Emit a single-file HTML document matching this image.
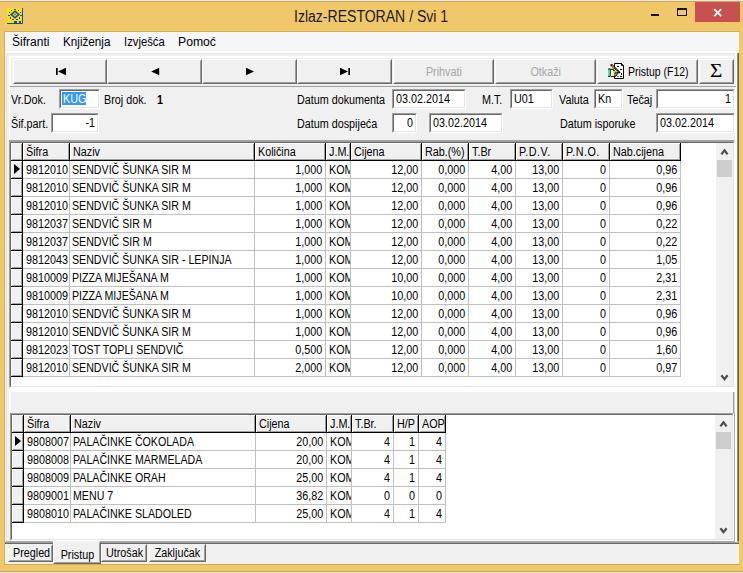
<!DOCTYPE html><html><head><meta charset="utf-8"><title>Izlaz-RESTORAN / Svi 1</title><style>
html,body{margin:0;padding:0}
body{width:743px;height:573px;overflow:hidden;position:relative;background:#F0C869;font:12.5px/14px "Liberation Sans",sans-serif;color:#000}
div,span,i{box-sizing:border-box}
.abs,.lbl,.ed,.btn,.grid,.hc,.c,.sb,.tab{position:absolute}
.t{display:inline-block;white-space:nowrap;transform:scaleX(0.862);transform-origin:0 50%}
.t.n{transform:scaleX(.851);margin-left:-.5px}
.r>.t,.r>div>.t{transform-origin:100% 50%}
.ctr .t{transform-origin:50% 50%}
#top0{left:0;top:0;width:743px;height:1px;background:#E4E4EA}
#top1{left:0;top:1px;width:743px;height:1px;background:#CDAB5A}
#bot{left:0;top:571px;width:743px;height:2px;background:#E6E6EC;border-top:1px solid #C2A050}
#title{left:294px;top:6px;font-size:15.6px;line-height:22px;color:#1c1c1c;white-space:nowrap;transform:scaleX(.90);transform-origin:0 50%}
#close{left:695px;top:2px;width:45px;height:20px;background:#C75050}
#client{left:5px;top:31px;width:734px;height:533px;background:#F0F0F0}
#menu{left:5px;top:32px;width:734px;height:18px;background:#F5F6F7;font-size:12.5px;line-height:20px}
#menu span{position:absolute;top:0;white-space:nowrap;transform-origin:0 50%}
.lbl{white-space:nowrap;line-height:14px;height:14px}
.ed{background:#fff;border:1px solid;border-color:#A0A0A0 #fff #fff #A0A0A0;height:21px}
.ed>div{position:absolute;left:0;top:0;right:0;bottom:0;border:1px solid;border-color:#696969 #E3E3E3 #E3E3E3 #696969;line-height:14px;padding:1px 0 0 2px;white-space:nowrap;overflow:hidden}
.ed.r>div{text-align:right;padding-right:2px}
.btn{height:25px;top:59px;background:#F0F0F0;border:1px solid;border-color:#fff #696969 #696969 #fff;text-align:center;line-height:24px}
.btn:after{content:"";position:absolute;left:0;top:0;right:0;bottom:0;border:1px solid;border-color:#F0F0F0 #A0A0A0 #A0A0A0 #F0F0F0;pointer-events:none}
.btn.dis{color:#A6A6A6}
.btn svg{position:absolute}
.grid{background:#fff;border:2px solid;border-color:#696969 #E3E3E3 #E3E3E3 #696969;box-sizing:content-box}
.grid:before{content:"";position:absolute;left:-2px;top:-2px;right:-2px;bottom:-2px;border:1px solid;border-color:#A0A0A0 #fff #fff #A0A0A0}
.hc{background:#F0F0F0;height:18px;border-right:1px solid #000;border-bottom:1px solid #000;box-shadow:inset 1px 1px 0 #fff,inset -1px -1px 0 #A0A0A0;line-height:19px;white-space:nowrap;overflow:hidden;padding-left:2.5px}
.c{height:18px;line-height:19px;border-right:1px solid #C0C0C0;border-bottom:1px solid #C0C0C0;white-space:nowrap;overflow:hidden;padding-left:2.5px}
.c.r{text-align:right;padding-right:3px;padding-left:0}
.arr{position:absolute;left:3px;top:3px;width:0;height:0;border-left:6px solid #000;border-top:5.5px solid transparent;border-bottom:5.5px solid transparent}
.sb{width:17px;background:#F0F0F0}
.sb .up{position:absolute;left:0;top:0}
.sb .dn{position:absolute;left:0;bottom:0}
.sb .th{position:absolute;left:1px;width:15px;background:#CDCDCD}
.tab{white-space:nowrap;text-align:center}
</style></head><body>
<div class="abs" id="top0"></div><div class="abs" id="top1"></div><div class="abs" id="bot"></div>
<svg class="abs" style="left:7px;top:8px" width="16" height="16" viewBox="0 0 16 16">
<rect x="0" y="0" width="16" height="16" fill="#FFE100"/>
<path d="M15.5 0 V15.5 H0" fill="none" stroke="#0A4FB8" stroke-width="1"/>
<path d="M8 2.3 L13 6.5 L8 10.7 L3 6.5 Z" fill="#0A4FB8"/><path d="M8 4.3 L10.6 6.5 L8 8.7 L5.4 6.5 Z" fill="#FFE100"/><rect x="7.3" y="5.8" width="1.4" height="1.4" fill="#0A4FB8"/>
<g fill="#0A4FB8"><rect x="7" y="1" width="2" height="1"/><rect x="4" y="2" width="1" height="1"/><rect x="11" y="2" width="1" height="1"/><rect x="2" y="4" width="1" height="1"/><rect x="13" y="4" width="1" height="1"/><rect x="1" y="7" width="2" height="1"/><rect x="13" y="7" width="2" height="1"/><rect x="3" y="9" width="1" height="2"/><rect x="12" y="9" width="1" height="2"/><rect x="5" y="11" width="2" height="1"/><rect x="9" y="11" width="2" height="1"/><rect x="7" y="13" width="3" height="2"/><rect x="12" y="13" width="2" height="2"/></g>
</svg>
<div class="abs" id="title">Izlaz-RESTORAN / Svi 1</div>
<div class="abs" style="left:651px;top:14px;width:8px;height:2px;background:#111"></div>
<div class="abs" style="left:677px;top:8px;width:10px;height:8px;border:1px solid #111;border-top-width:2px"></div>
<div class="abs" id="close"><svg width="45" height="20" viewBox="0 0 45 20"><path d="M19.2 7.2 L26.2 14.2 M26.2 7.2 L19.2 14.2" stroke="#fff" stroke-width="1.8" fill="none"/></svg></div>
<div class="abs" id="client"></div>
<div class="abs" style="left:4px;top:564px;width:736px;height:1px;background:#CDAA57"></div>
<div class="abs" style="left:4px;top:31px;width:736px;height:1px;background:#D2AE59"></div>
<div class="abs" id="menu"><span style="left:6.7px;transform:scaleX(0.961)">Šifranti</span><span style="left:57.9px;transform:scaleX(0.936)">Knjiženja</span><span style="left:118.6px;transform:scaleX(0.901)">Izvješća</span><span style="left:173.1px;transform:scaleX(0.976)">Pomoć</span></div>
<div class="abs" style="left:5px;top:51px;width:734px;height:2px;background:#fff"></div>
<div class="abs" style="left:4px;top:31px;width:1px;height:533px;background:#D6B15A"></div>
<div class="abs" style="left:6px;top:53px;width:732px;height:1px;background:#E6E6E6"></div>
<div class="abs" style="left:735px;top:53px;width:1.5px;height:488px;background:#fff"></div>
<div class="abs" style="left:737px;top:53px;width:1px;height:491px;background:#909090"></div>
<div class="abs" style="left:738px;top:53px;width:1px;height:491px;background:#5F5F66"></div>
<div class="abs" style="left:5px;top:541px;width:734px;height:1px;background:#A8A8A8"></div>
<div class="abs" style="left:5px;top:542px;width:734px;height:1px;background:#A0A0A0"></div>
<div class="abs" style="left:5px;top:543px;width:734px;height:1px;background:#696969"></div>
<div class="abs" style="left:9px;top:56px;width:727px;height:30px;border:2px solid;border-color:#fff #F0F0F0 #F0F0F0 #fff"></div>
<div class="btn" style="left:13px;width:94px"></div>
<div class="btn" style="left:107px;width:95px"></div>
<div class="btn" style="left:202px;width:95px"></div>
<div class="btn" style="left:297px;width:95px"></div>
<svg class="abs" style="left:0;top:59px" width="400" height="25" viewBox="0 59 400 25"><g fill="#000"><rect x="56" y="68" width="1.7" height="7"/><path d="M58 71.5 L66 67.8 V75.2 Z"/><path d="M151.2 71.5 L159.2 67.8 V75.2 Z"/><path d="M254 71.5 L246 67.8 V75.2 Z"/><path d="M348 71.5 L340 67.8 V75.2 Z"/><rect x="348.3" y="68" width="1.7" height="7"/></g></svg>
<div class="btn dis ctr" style="left:393px;width:101px"><span class="t">Prihvati</span></div>
<div class="btn dis ctr" style="left:495px;width:101px"><span class="t">Otkaži</span></div>
<div class="btn" style="left:597px;width:101px"><svg style="left:10px;top:3px" width="17" height="17" viewBox="0 0 17 17">
<path d="M6.5 0.5 H13.5 L15.5 2.5 V15.5 H6.5 Z" fill="#fff" stroke="#000" stroke-width="1"/>
<path d="M13.5 0.5 V2.5 H15.5" fill="none" stroke="#000" stroke-width="1"/>
<path d="M9 3.5 H11 M12 6.5 H14 M13.5 10 V12 M9.5 13.5 H10.5 M12 13.5 H14" stroke="#000" stroke-width="1" fill="none"/>
<path d="M3 1.5 L11.8 10" stroke="#000" stroke-width="2.3" fill="none"/>
<path d="M4 2.5 L11 9.3" stroke="#FFF000" stroke-width="1.1" stroke-dasharray="1.2 .5" fill="none"/>
<rect x="2.6" y="1" width="1.2" height="1.2" fill="#E00000"/>
<path d="M2.2 6.3 L5.2 6.3 L6.8 5.6 L8.6 7.2 L10.6 8.3 L10.6 9.6 L9 10 L9 12 L7.5 13.6 L3.5 13.6 L2.2 12.6 Z" fill="#FFF88C" stroke="#000" stroke-width="1"/>
<path d="M5 7.6 H7 M6.5 9.2 H10 M6 10.8 H8.4 M6 12.3 H7.8" stroke="#000" stroke-width="0.9" fill="none"/>
<rect x="0.2" y="6" width="1.7" height="7.4" fill="#00E5F5"/>
<path d="M0.2 6 H2.2 M0.2 13.4 H2.2" stroke="#000" stroke-width="1" fill="none"/>
</svg><span class="t" style="position:absolute;left:30px;top:0;transform:scaleX(.838)">Pristup (F12)</span></div>
<div class="btn" style="left:699px;width:35px;font:18px 'Liberation Serif',serif;line-height:22px"><span style="display:inline-block;transform:scaleX(1.18)">Σ</span></div>
<div class="abs" style="left:10px;top:86px;width:726px;height:1px;background:#A0A0A0"></div>
<div class="abs" style="left:9px;top:87px;width:1px;height:54px;background:#fff"></div>
<div class="abs" style="left:5px;top:53px;width:1px;height:489px;background:#fff"></div>
<div class="abs" style="left:6px;top:54px;width:1px;height:487px;background:#E6E6E6"></div>
<div class="lbl" style="left:10.5px;top:93px;"><span class="t">Vr.Dok.</span></div>
<div class="ed" style="left:59px;top:89px;width:41px;height:20px"><div><span style="position:absolute;left:1px;top:1px;width:24px;height:13px;background:#3399FF"></span><span class="t" style="color:#fff;position:relative">KUG</span></div></div>
<div class="lbl" style="left:104px;top:93px;"><span class="t">Broj dok.</span></div>
<div class="lbl" style="left:157px;top:93px;font-weight:bold"><span class="t">1</span></div>
<div class="lbl" style="left:297px;top:93px;"><span class="t">Datum dokumenta</span></div>
<div class="ed" style="left:392px;top:89px;width:74px;height:20px"><div><span class=t>03.02.2014</span></div></div>
<div class="lbl" style="left:482px;top:93px;"><span class="t">M.T.</span></div>
<div class="ed" style="left:510px;top:89px;width:43px;height:20px"><div><span class=t>U01</span></div></div>
<div class="lbl" style="left:559px;top:93px;"><span class="t">Valuta</span></div>
<div class="ed" style="left:594px;top:89px;width:29px;height:20px"><div><span class=t>Kn</span></div></div>
<div class="lbl" style="left:626.5px;top:93px;"><span class="t">Tečaj</span></div>
<div class="ed r" style="left:656px;top:89px;width:79px;height:20px"><div><span class=t>1</span></div></div>
<div class="lbl" style="left:10.5px;top:117px;"><span class="t">Šif.part.</span></div>
<div class="ed r" style="left:51px;top:113px;width:48px;height:20px"><div><span class=t>-1</span></div></div>
<div class="lbl" style="left:297px;top:117px;"><span class="t">Datum dospijeća</span></div>
<div class="ed r" style="left:392px;top:113px;width:25px;height:20px"><div><span class=t>0</span></div></div>
<div class="ed" style="left:429px;top:113px;width:74px;height:20px"><div><span class=t>03.02.2014</span></div></div>
<div class="lbl" style="left:560px;top:117px;"><span class="t">Datum isporuke</span></div>
<div class="ed" style="left:656px;top:113px;width:79px;height:20px"><div><span class=t>03.02.2014</span></div></div>
<div class="abs" style="left:9px;top:140px;width:725px;height:1px;background:#A0A0A0"></div>
<div class="grid" style="left:9px;top:141px;width:722px;height:243px">
<div class="hc" style="left:0px;top:0;width:12px"><span class="t"></span></div>
<div class="hc" style="left:12px;top:0;width:47px"><span class="t">Šifra</span></div>
<div class="hc" style="left:59px;top:0;width:185px"><span class="t">Naziv</span></div>
<div class="hc" style="left:244px;top:0;width:71px"><span class="t">Količina</span></div>
<div class="hc" style="left:315px;top:0;width:25px"><span class="t">J.M.</span></div>
<div class="hc" style="left:340px;top:0;width:71px"><span class="t">Cijena</span></div>
<div class="hc" style="left:411px;top:0;width:47px"><span class="t">Rab.(%)</span></div>
<div class="hc" style="left:458px;top:0;width:47px"><span class="t">T.Br</span></div>
<div class="hc" style="left:505px;top:0;width:47px"><span class="t" style="letter-spacing:.55px">P.D.V.</span></div>
<div class="hc" style="left:552px;top:0;width:47px"><span class="t" style="letter-spacing:.55px">P.N.O.</span></div>
<div class="hc" style="left:599px;top:0;width:71px"><span class="t">Nab.cijena</span></div>
<div class="hc ic" style="left:0;top:18px;width:12px"><i class="arr"></i></div>
<div class="c" style="left:12px;top:18px;width:47px"><span class="t">9812010</span></div>
<div class="c" style="left:59px;top:18px;width:185px"><span class="t n">SENDVIČ ŠUNKA SIR M</span></div>
<div class="c r" style="left:244px;top:18px;width:71px"><span class="t">1,000</span></div>
<div class="c" style="left:315px;top:18px;width:25px"><span class="t">KOM</span></div>
<div class="c r" style="left:340px;top:18px;width:71px"><span class="t">12,00</span></div>
<div class="c r" style="left:411px;top:18px;width:47px"><span class="t">0,000</span></div>
<div class="c r" style="left:458px;top:18px;width:47px"><span class="t">4,00</span></div>
<div class="c r" style="left:505px;top:18px;width:47px"><span class="t">13,00</span></div>
<div class="c r" style="left:552px;top:18px;width:47px"><span class="t">0</span></div>
<div class="c r" style="left:599px;top:18px;width:71px"><span class="t">0,96</span></div>
<div class="hc ic" style="left:0;top:36px;width:12px"></div>
<div class="c" style="left:12px;top:36px;width:47px"><span class="t">9812010</span></div>
<div class="c" style="left:59px;top:36px;width:185px"><span class="t n">SENDVIČ ŠUNKA SIR M</span></div>
<div class="c r" style="left:244px;top:36px;width:71px"><span class="t">1,000</span></div>
<div class="c" style="left:315px;top:36px;width:25px"><span class="t">KOM</span></div>
<div class="c r" style="left:340px;top:36px;width:71px"><span class="t">12,00</span></div>
<div class="c r" style="left:411px;top:36px;width:47px"><span class="t">0,000</span></div>
<div class="c r" style="left:458px;top:36px;width:47px"><span class="t">4,00</span></div>
<div class="c r" style="left:505px;top:36px;width:47px"><span class="t">13,00</span></div>
<div class="c r" style="left:552px;top:36px;width:47px"><span class="t">0</span></div>
<div class="c r" style="left:599px;top:36px;width:71px"><span class="t">0,96</span></div>
<div class="hc ic" style="left:0;top:54px;width:12px"></div>
<div class="c" style="left:12px;top:54px;width:47px"><span class="t">9812010</span></div>
<div class="c" style="left:59px;top:54px;width:185px"><span class="t n">SENDVIČ ŠUNKA SIR M</span></div>
<div class="c r" style="left:244px;top:54px;width:71px"><span class="t">1,000</span></div>
<div class="c" style="left:315px;top:54px;width:25px"><span class="t">KOM</span></div>
<div class="c r" style="left:340px;top:54px;width:71px"><span class="t">12,00</span></div>
<div class="c r" style="left:411px;top:54px;width:47px"><span class="t">0,000</span></div>
<div class="c r" style="left:458px;top:54px;width:47px"><span class="t">4,00</span></div>
<div class="c r" style="left:505px;top:54px;width:47px"><span class="t">13,00</span></div>
<div class="c r" style="left:552px;top:54px;width:47px"><span class="t">0</span></div>
<div class="c r" style="left:599px;top:54px;width:71px"><span class="t">0,96</span></div>
<div class="hc ic" style="left:0;top:72px;width:12px"></div>
<div class="c" style="left:12px;top:72px;width:47px"><span class="t">9812037</span></div>
<div class="c" style="left:59px;top:72px;width:185px"><span class="t n">SENDVIČ SIR M</span></div>
<div class="c r" style="left:244px;top:72px;width:71px"><span class="t">1,000</span></div>
<div class="c" style="left:315px;top:72px;width:25px"><span class="t">KOM</span></div>
<div class="c r" style="left:340px;top:72px;width:71px"><span class="t">12,00</span></div>
<div class="c r" style="left:411px;top:72px;width:47px"><span class="t">0,000</span></div>
<div class="c r" style="left:458px;top:72px;width:47px"><span class="t">4,00</span></div>
<div class="c r" style="left:505px;top:72px;width:47px"><span class="t">13,00</span></div>
<div class="c r" style="left:552px;top:72px;width:47px"><span class="t">0</span></div>
<div class="c r" style="left:599px;top:72px;width:71px"><span class="t">0,22</span></div>
<div class="hc ic" style="left:0;top:90px;width:12px"></div>
<div class="c" style="left:12px;top:90px;width:47px"><span class="t">9812037</span></div>
<div class="c" style="left:59px;top:90px;width:185px"><span class="t n">SENDVIČ SIR M</span></div>
<div class="c r" style="left:244px;top:90px;width:71px"><span class="t">1,000</span></div>
<div class="c" style="left:315px;top:90px;width:25px"><span class="t">KOM</span></div>
<div class="c r" style="left:340px;top:90px;width:71px"><span class="t">12,00</span></div>
<div class="c r" style="left:411px;top:90px;width:47px"><span class="t">0,000</span></div>
<div class="c r" style="left:458px;top:90px;width:47px"><span class="t">4,00</span></div>
<div class="c r" style="left:505px;top:90px;width:47px"><span class="t">13,00</span></div>
<div class="c r" style="left:552px;top:90px;width:47px"><span class="t">0</span></div>
<div class="c r" style="left:599px;top:90px;width:71px"><span class="t">0,22</span></div>
<div class="hc ic" style="left:0;top:108px;width:12px"></div>
<div class="c" style="left:12px;top:108px;width:47px"><span class="t">9812043</span></div>
<div class="c" style="left:59px;top:108px;width:185px"><span class="t n">SENDVIČ ŠUNKA SIR - LEPINJA</span></div>
<div class="c r" style="left:244px;top:108px;width:71px"><span class="t">1,000</span></div>
<div class="c" style="left:315px;top:108px;width:25px"><span class="t">KOM</span></div>
<div class="c r" style="left:340px;top:108px;width:71px"><span class="t">12,00</span></div>
<div class="c r" style="left:411px;top:108px;width:47px"><span class="t">0,000</span></div>
<div class="c r" style="left:458px;top:108px;width:47px"><span class="t">4,00</span></div>
<div class="c r" style="left:505px;top:108px;width:47px"><span class="t">13,00</span></div>
<div class="c r" style="left:552px;top:108px;width:47px"><span class="t">0</span></div>
<div class="c r" style="left:599px;top:108px;width:71px"><span class="t">1,05</span></div>
<div class="hc ic" style="left:0;top:126px;width:12px"></div>
<div class="c" style="left:12px;top:126px;width:47px"><span class="t">9810009</span></div>
<div class="c" style="left:59px;top:126px;width:185px"><span class="t n">PIZZA MIJEŠANA M</span></div>
<div class="c r" style="left:244px;top:126px;width:71px"><span class="t">1,000</span></div>
<div class="c" style="left:315px;top:126px;width:25px"><span class="t">KOM</span></div>
<div class="c r" style="left:340px;top:126px;width:71px"><span class="t">10,00</span></div>
<div class="c r" style="left:411px;top:126px;width:47px"><span class="t">0,000</span></div>
<div class="c r" style="left:458px;top:126px;width:47px"><span class="t">4,00</span></div>
<div class="c r" style="left:505px;top:126px;width:47px"><span class="t">13,00</span></div>
<div class="c r" style="left:552px;top:126px;width:47px"><span class="t">0</span></div>
<div class="c r" style="left:599px;top:126px;width:71px"><span class="t">2,31</span></div>
<div class="hc ic" style="left:0;top:144px;width:12px"></div>
<div class="c" style="left:12px;top:144px;width:47px"><span class="t">9810009</span></div>
<div class="c" style="left:59px;top:144px;width:185px"><span class="t n">PIZZA MIJEŠANA M</span></div>
<div class="c r" style="left:244px;top:144px;width:71px"><span class="t">1,000</span></div>
<div class="c" style="left:315px;top:144px;width:25px"><span class="t">KOM</span></div>
<div class="c r" style="left:340px;top:144px;width:71px"><span class="t">10,00</span></div>
<div class="c r" style="left:411px;top:144px;width:47px"><span class="t">0,000</span></div>
<div class="c r" style="left:458px;top:144px;width:47px"><span class="t">4,00</span></div>
<div class="c r" style="left:505px;top:144px;width:47px"><span class="t">13,00</span></div>
<div class="c r" style="left:552px;top:144px;width:47px"><span class="t">0</span></div>
<div class="c r" style="left:599px;top:144px;width:71px"><span class="t">2,31</span></div>
<div class="hc ic" style="left:0;top:162px;width:12px"></div>
<div class="c" style="left:12px;top:162px;width:47px"><span class="t">9812010</span></div>
<div class="c" style="left:59px;top:162px;width:185px"><span class="t n">SENDVIČ ŠUNKA SIR M</span></div>
<div class="c r" style="left:244px;top:162px;width:71px"><span class="t">1,000</span></div>
<div class="c" style="left:315px;top:162px;width:25px"><span class="t">KOM</span></div>
<div class="c r" style="left:340px;top:162px;width:71px"><span class="t">12,00</span></div>
<div class="c r" style="left:411px;top:162px;width:47px"><span class="t">0,000</span></div>
<div class="c r" style="left:458px;top:162px;width:47px"><span class="t">4,00</span></div>
<div class="c r" style="left:505px;top:162px;width:47px"><span class="t">13,00</span></div>
<div class="c r" style="left:552px;top:162px;width:47px"><span class="t">0</span></div>
<div class="c r" style="left:599px;top:162px;width:71px"><span class="t">0,96</span></div>
<div class="hc ic" style="left:0;top:180px;width:12px"></div>
<div class="c" style="left:12px;top:180px;width:47px"><span class="t">9812010</span></div>
<div class="c" style="left:59px;top:180px;width:185px"><span class="t n">SENDVIČ ŠUNKA SIR M</span></div>
<div class="c r" style="left:244px;top:180px;width:71px"><span class="t">1,000</span></div>
<div class="c" style="left:315px;top:180px;width:25px"><span class="t">KOM</span></div>
<div class="c r" style="left:340px;top:180px;width:71px"><span class="t">12,00</span></div>
<div class="c r" style="left:411px;top:180px;width:47px"><span class="t">0,000</span></div>
<div class="c r" style="left:458px;top:180px;width:47px"><span class="t">4,00</span></div>
<div class="c r" style="left:505px;top:180px;width:47px"><span class="t">13,00</span></div>
<div class="c r" style="left:552px;top:180px;width:47px"><span class="t">0</span></div>
<div class="c r" style="left:599px;top:180px;width:71px"><span class="t">0,96</span></div>
<div class="hc ic" style="left:0;top:198px;width:12px"></div>
<div class="c" style="left:12px;top:198px;width:47px"><span class="t">9812023</span></div>
<div class="c" style="left:59px;top:198px;width:185px"><span class="t n">TOST TOPLI SENDVIČ</span></div>
<div class="c r" style="left:244px;top:198px;width:71px"><span class="t">0,500</span></div>
<div class="c" style="left:315px;top:198px;width:25px"><span class="t">KOM</span></div>
<div class="c r" style="left:340px;top:198px;width:71px"><span class="t">12,00</span></div>
<div class="c r" style="left:411px;top:198px;width:47px"><span class="t">0,000</span></div>
<div class="c r" style="left:458px;top:198px;width:47px"><span class="t">4,00</span></div>
<div class="c r" style="left:505px;top:198px;width:47px"><span class="t">13,00</span></div>
<div class="c r" style="left:552px;top:198px;width:47px"><span class="t">0</span></div>
<div class="c r" style="left:599px;top:198px;width:71px"><span class="t">1,60</span></div>
<div class="hc ic" style="left:0;top:216px;width:12px"></div>
<div class="c" style="left:12px;top:216px;width:47px"><span class="t">9812010</span></div>
<div class="c" style="left:59px;top:216px;width:185px"><span class="t n">SENDVIČ ŠUNKA SIR M</span></div>
<div class="c r" style="left:244px;top:216px;width:71px"><span class="t">2,000</span></div>
<div class="c" style="left:315px;top:216px;width:25px"><span class="t">KOM</span></div>
<div class="c r" style="left:340px;top:216px;width:71px"><span class="t">12,00</span></div>
<div class="c r" style="left:411px;top:216px;width:47px"><span class="t">0,000</span></div>
<div class="c r" style="left:458px;top:216px;width:47px"><span class="t">4,00</span></div>
<div class="c r" style="left:505px;top:216px;width:47px"><span class="t">13,00</span></div>
<div class="c r" style="left:552px;top:216px;width:47px"><span class="t">0</span></div>
<div class="c r" style="left:599px;top:216px;width:71px"><span class="t">0,97</span></div>
<div class="sb" style="left:705px;top:0;height:243px"><svg class="up" width="17" height="17" viewBox="0 0 17 17"><path d="M5.4 11.4 L8.5 7.4 L11.6 11.4" fill="none" stroke="#505050" stroke-width="2.3"/></svg><div class="th" style="top:17px;height:17px"></div><svg class="dn" width="17" height="17" viewBox="0 0 17 17"><path d="M5.4 6.2 L8.5 10.2 L11.6 6.2" fill="none" stroke="#505050" stroke-width="2.3"/></svg></div>
</div>
<div class="abs" style="left:9px;top:388px;width:728px;height:4px;background:#fff"></div>
<div class="abs" style="left:9px;top:392px;width:1.5px;height:21px;background:#fff"></div>
<div class="abs" style="left:735px;top:391px;width:2px;height:151px;background:#fff"></div>
<div class="abs" style="left:733px;top:392px;width:1px;height:21px;background:#A0A0A0"></div>
<div class="abs" style="left:734px;top:392px;width:1px;height:21px;background:#D0D0D0"></div>
<div class="grid" style="left:10px;top:413px;width:720px;height:124px">
<div class="hc" style="left:0px;top:0;width:12px"><span class="t"></span></div>
<div class="hc" style="left:12px;top:0;width:47px"><span class="t">Šifra</span></div>
<div class="hc" style="left:59px;top:0;width:185px"><span class="t">Naziv</span></div>
<div class="hc" style="left:244px;top:0;width:71px"><span class="t">Cijena</span></div>
<div class="hc" style="left:315px;top:0;width:25px"><span class="t">J.M.</span></div>
<div class="hc" style="left:340px;top:0;width:42px"><span class="t">T.Br.</span></div>
<div class="hc" style="left:382px;top:0;width:25px"><span class="t">H/P</span></div>
<div class="hc" style="left:407px;top:0;width:27px"><span class="t">AOP</span></div>
<div class="hc ic" style="left:0;top:18px;width:12px"><i class="arr"></i></div>
<div class="c" style="left:12px;top:18px;width:47px"><span class="t">9808007</span></div>
<div class="c" style="left:59px;top:18px;width:185px"><span class="t n">PALAČINKE ČOKOLADA</span></div>
<div class="c r" style="left:244px;top:18px;width:71px"><span class="t">20,00</span></div>
<div class="c" style="left:315px;top:18px;width:25px"><span class="t">KOM</span></div>
<div class="c r" style="left:340px;top:18px;width:42px"><span class="t">4</span></div>
<div class="c r" style="left:382px;top:18px;width:25px"><span class="t">1</span></div>
<div class="c r" style="left:407px;top:18px;width:27px"><span class="t">4</span></div>
<div class="hc ic" style="left:0;top:36px;width:12px"></div>
<div class="c" style="left:12px;top:36px;width:47px"><span class="t">9808008</span></div>
<div class="c" style="left:59px;top:36px;width:185px"><span class="t n">PALAČINKE MARMELADA</span></div>
<div class="c r" style="left:244px;top:36px;width:71px"><span class="t">20,00</span></div>
<div class="c" style="left:315px;top:36px;width:25px"><span class="t">KOM</span></div>
<div class="c r" style="left:340px;top:36px;width:42px"><span class="t">4</span></div>
<div class="c r" style="left:382px;top:36px;width:25px"><span class="t">1</span></div>
<div class="c r" style="left:407px;top:36px;width:27px"><span class="t">4</span></div>
<div class="hc ic" style="left:0;top:54px;width:12px"></div>
<div class="c" style="left:12px;top:54px;width:47px"><span class="t">9808009</span></div>
<div class="c" style="left:59px;top:54px;width:185px"><span class="t n">PALAČINKE ORAH</span></div>
<div class="c r" style="left:244px;top:54px;width:71px"><span class="t">25,00</span></div>
<div class="c" style="left:315px;top:54px;width:25px"><span class="t">KOM</span></div>
<div class="c r" style="left:340px;top:54px;width:42px"><span class="t">4</span></div>
<div class="c r" style="left:382px;top:54px;width:25px"><span class="t">1</span></div>
<div class="c r" style="left:407px;top:54px;width:27px"><span class="t">4</span></div>
<div class="hc ic" style="left:0;top:72px;width:12px"></div>
<div class="c" style="left:12px;top:72px;width:47px"><span class="t">9809001</span></div>
<div class="c" style="left:59px;top:72px;width:185px"><span class="t n">MENU 7</span></div>
<div class="c r" style="left:244px;top:72px;width:71px"><span class="t">36,82</span></div>
<div class="c" style="left:315px;top:72px;width:25px"><span class="t">KOM</span></div>
<div class="c r" style="left:340px;top:72px;width:42px"><span class="t">0</span></div>
<div class="c r" style="left:382px;top:72px;width:25px"><span class="t">0</span></div>
<div class="c r" style="left:407px;top:72px;width:27px"><span class="t">0</span></div>
<div class="hc ic" style="left:0;top:90px;width:12px"></div>
<div class="c" style="left:12px;top:90px;width:47px"><span class="t">9808010</span></div>
<div class="c" style="left:59px;top:90px;width:185px"><span class="t n">PALAČINKE SLADOLED</span></div>
<div class="c r" style="left:244px;top:90px;width:71px"><span class="t">25,00</span></div>
<div class="c" style="left:315px;top:90px;width:25px"><span class="t">KOM</span></div>
<div class="c r" style="left:340px;top:90px;width:42px"><span class="t">4</span></div>
<div class="c r" style="left:382px;top:90px;width:25px"><span class="t">1</span></div>
<div class="c r" style="left:407px;top:90px;width:27px"><span class="t">4</span></div>
<div class="sb" style="left:703px;top:0;height:124px"><svg class="up" width="17" height="17" viewBox="0 0 17 17"><path d="M5.4 11.4 L8.5 7.4 L11.6 11.4" fill="none" stroke="#505050" stroke-width="2.3"/></svg><div class="th" style="top:17px;height:17px"></div><svg class="dn" width="17" height="17" viewBox="0 0 17 17"><path d="M5.4 6.2 L8.5 10.2 L11.6 6.2" fill="none" stroke="#505050" stroke-width="2.3"/></svg></div>
</div>
<div class="abs" style="left:734px;top:413px;width:1px;height:128px;background:#A8A8A8"></div>
<div class="tab ctr" style="left:8px;top:544px;width:45px;height:18px;border:1px solid;border-color:transparent #696969 #696969 #fff;line-height:14px"><div style="position:absolute;left:0;right:0;top:0;bottom:0;border:1px solid;border-color:transparent #A0A0A0 #A0A0A0 transparent"><span class="t">Pregled</span></div></div>
<div class="tab ctr" style="left:53px;top:541px;width:48px;height:23px;background:#F0F0F0;border:1px solid;border-color:transparent #696969 #696969 #fff;line-height:24px"><div style="position:absolute;left:0;right:0;top:0;bottom:0;border:1px solid;border-color:transparent #A0A0A0 #A0A0A0 transparent"><span class="t">Pristup</span></div></div>
<div class="tab ctr" style="left:101px;top:544px;width:46px;height:18px;border:1px solid;border-color:transparent #696969 #696969 #fff;line-height:14px"><div style="position:absolute;left:0;right:0;top:0;bottom:0;border:1px solid;border-color:transparent #A0A0A0 #A0A0A0 transparent"><span class="t">Utrošak</span></div></div>
<div class="tab ctr" style="left:149px;top:544px;width:57px;height:18px;border:1px solid;border-color:transparent #696969 #696969 #fff;line-height:14px"><div style="position:absolute;left:0;right:0;top:0;bottom:0;border:1px solid;border-color:transparent #A0A0A0 #A0A0A0 transparent"><span class="t">Zaključak</span></div></div>
</body></html>
